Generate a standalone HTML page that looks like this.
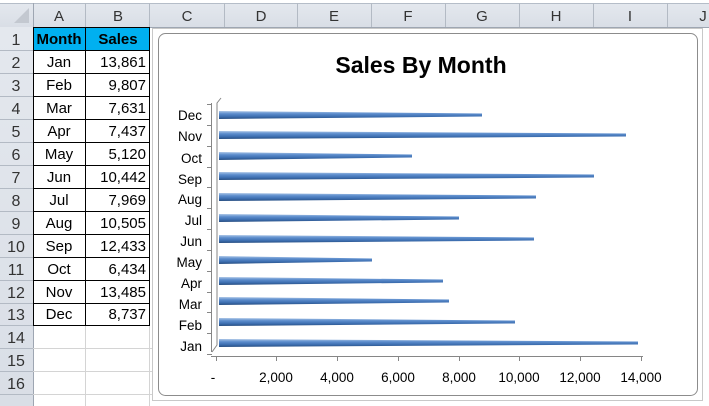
<!DOCTYPE html>
<html><head><meta charset="utf-8"><style>
body{margin:0;width:709px;height:406px;overflow:hidden;background:#fff;font-family:"Liberation Sans",sans-serif;position:relative}
.a{position:absolute}
</style></head><body>
<svg class="a" style="left:0;top:0" width="709" height="406" xmlns="http://www.w3.org/2000/svg" font-family="Liberation Sans, sans-serif">
<defs>
<linearGradient id="hg" x1="0" y1="0" x2="0" y2="1"><stop offset="0" stop-color="#e4e8ee"/><stop offset="1" stop-color="#d9dee6"/></linearGradient>
<linearGradient id="bg" x1="0" y1="0" x2="0" y2="1"><stop offset="0" stop-color="#a9c4e6"/><stop offset="0.35" stop-color="#5b8ccc"/><stop offset="0.7" stop-color="#3d6eb0"/><stop offset="1" stop-color="#274d80"/></linearGradient>
</defs>
<rect x="0" y="3" width="709" height="24" fill="url(#hg)"/>
<line x1="0" y1="3.5" x2="709" y2="3.5" stroke="#b5bdc8"/>
<line x1="0" y1="27.5" x2="709" y2="27.5" stroke="#9ea6b2"/>
<rect x="0" y="27" width="33" height="379" fill="url(#hg)"/>
<line x1="33.5" y1="3" x2="33.5" y2="406" stroke="#9ea6b2"/>
<polygon points="14,23 29,23 29,8" fill="#c3c8d0"/>
<g stroke="#b3bac4">
<line x1="85.5" y1="3" x2="85.5" y2="27"/><line x1="149.5" y1="3" x2="149.5" y2="27"/><line x1="224.5" y1="3" x2="224.5" y2="27"/><line x1="297.5" y1="3" x2="297.5" y2="27"/><line x1="371.5" y1="3" x2="371.5" y2="27"/><line x1="445.5" y1="3" x2="445.5" y2="27"/><line x1="519.5" y1="3" x2="519.5" y2="27"/><line x1="593.5" y1="3" x2="593.5" y2="27"/><line x1="667.5" y1="3" x2="667.5" y2="27"/>
</g>
<g font-size="15" fill="#333" text-anchor="middle">
<text x="59" y="21">A</text><text x="118" y="21">B</text><text x="187" y="21">C</text><text x="261" y="21">D</text><text x="334" y="21">E</text><text x="408" y="21">F</text><text x="482" y="21">G</text><text x="556" y="21">H</text><text x="630" y="21">I</text><text x="703" y="21">J</text>
</g>
<g stroke="#b3bac4">
<line x1="0" y1="50.5" x2="33" y2="50.5"/><line x1="0" y1="73.5" x2="33" y2="73.5"/><line x1="0" y1="96.5" x2="33" y2="96.5"/><line x1="0" y1="119.5" x2="33" y2="119.5"/><line x1="0" y1="142.5" x2="33" y2="142.5"/><line x1="0" y1="165.5" x2="33" y2="165.5"/><line x1="0" y1="188.5" x2="33" y2="188.5"/><line x1="0" y1="211.5" x2="33" y2="211.5"/><line x1="0" y1="234.5" x2="33" y2="234.5"/><line x1="0" y1="257.5" x2="33" y2="257.5"/><line x1="0" y1="280.5" x2="33" y2="280.5"/><line x1="0" y1="303.5" x2="33" y2="303.5"/><line x1="0" y1="325.5" x2="33" y2="325.5"/><line x1="0" y1="348.5" x2="33" y2="348.5"/><line x1="0" y1="371.5" x2="33" y2="371.5"/><line x1="0" y1="394.5" x2="33" y2="394.5"/>
</g>
<g stroke="#d4d4d4">
<line x1="33" y1="348.5" x2="152" y2="348.5"/><line x1="33" y1="371.5" x2="152" y2="371.5"/><line x1="33" y1="394.5" x2="152" y2="394.5"/>
<line x1="85.5" y1="326" x2="85.5" y2="406"/><line x1="149.5" y1="326" x2="149.5" y2="406"/>
</g>
<g font-size="16" fill="#333" text-anchor="middle">
<text x="16" y="45">1</text><text x="16" y="68">2</text><text x="16" y="91">3</text><text x="16" y="114">4</text><text x="16" y="137">5</text><text x="16" y="160">6</text><text x="16" y="183">7</text><text x="16" y="206">8</text><text x="16" y="229">9</text><text x="16" y="252">10</text><text x="16" y="275">11</text><text x="16" y="298">12</text><text x="16" y="320">13</text><text x="16" y="343">14</text><text x="16" y="366">15</text><text x="16" y="389">16</text>
</g>
<rect x="33" y="27" width="116" height="23" fill="#00b0f0"/>
<g stroke="#000">
<line x1="33" y1="27.5" x2="150" y2="27.5"/><line x1="33" y1="50.5" x2="150" y2="50.5"/><line x1="33" y1="73.5" x2="150" y2="73.5"/><line x1="33" y1="96.5" x2="150" y2="96.5"/><line x1="33" y1="119.5" x2="150" y2="119.5"/><line x1="33" y1="142.5" x2="150" y2="142.5"/><line x1="33" y1="165.5" x2="150" y2="165.5"/><line x1="33" y1="188.5" x2="150" y2="188.5"/><line x1="33" y1="211.5" x2="150" y2="211.5"/><line x1="33" y1="234.5" x2="150" y2="234.5"/><line x1="33" y1="257.5" x2="150" y2="257.5"/><line x1="33" y1="280.5" x2="150" y2="280.5"/><line x1="33" y1="303.5" x2="150" y2="303.5"/><line x1="33" y1="325.5" x2="150" y2="325.5"/>
<line x1="33.5" y1="27" x2="33.5" y2="326"/><line x1="85.5" y1="27" x2="85.5" y2="326"/><line x1="149.5" y1="27" x2="149.5" y2="326"/>
</g>
<g font-size="15" fill="#000">
<text x="59" y="44" text-anchor="middle" font-weight="bold">Month</text><text x="118" y="44" text-anchor="middle" font-weight="bold">Sales</text>
<g text-anchor="middle"><text x="59" y="67">Jan</text><text x="59" y="90">Feb</text><text x="59" y="113">Mar</text><text x="59" y="136">Apr</text><text x="59" y="159">May</text><text x="59" y="182">Jun</text><text x="59" y="205">Jul</text><text x="59" y="228">Aug</text><text x="59" y="251">Sep</text><text x="59" y="274">Oct</text><text x="59" y="297">Nov</text><text x="59" y="319">Dec</text></g>
<g text-anchor="end"><text x="146" y="67">13,861</text><text x="146" y="90">9,807</text><text x="146" y="113">7,631</text><text x="146" y="136">7,437</text><text x="146" y="159">5,120</text><text x="146" y="182">10,442</text><text x="146" y="205">7,969</text><text x="146" y="228">10,505</text><text x="146" y="251">12,433</text><text x="146" y="274">6,434</text><text x="146" y="297">13,485</text><text x="146" y="319">8,737</text></g>
</g>
<rect x="152.5" y="28.5" width="550" height="372" fill="#fff" stroke="#c8c8c8"/>
<rect x="158.5" y="33.5" width="539" height="362" rx="7" fill="#fff" stroke="#8c8c8c"/>
<text x="421" y="73" font-size="23" font-weight="bold" text-anchor="middle" fill="#000">Sales By Month</text>
<g stroke="#868686" fill="none">
<polyline points="212,352 217,345 217,103 221,98"/>
<line x1="211.5" y1="352" x2="211.5" y2="103"/>
<line x1="211" y1="356.5" x2="643" y2="356.5"/>
<line x1="216.5" y1="357" x2="216.5" y2="361"/><line x1="276.5" y1="357" x2="276.5" y2="361"/><line x1="337.5" y1="357" x2="337.5" y2="361"/><line x1="398.5" y1="357" x2="398.5" y2="361"/><line x1="459.5" y1="357" x2="459.5" y2="361"/><line x1="519.5" y1="357" x2="519.5" y2="361"/><line x1="580.5" y1="357" x2="580.5" y2="361"/><line x1="641.5" y1="357" x2="641.5" y2="361"/>
<line x1="207" y1="104.5" x2="212" y2="104.5"/><line x1="207" y1="125.5" x2="212" y2="125.5"/><line x1="207" y1="146.5" x2="212" y2="146.5"/><line x1="207" y1="167.5" x2="212" y2="167.5"/><line x1="207" y1="187.5" x2="212" y2="187.5"/><line x1="207" y1="208.5" x2="212" y2="208.5"/><line x1="207" y1="229.5" x2="212" y2="229.5"/><line x1="207" y1="250.5" x2="212" y2="250.5"/><line x1="207" y1="271.5" x2="212" y2="271.5"/><line x1="207" y1="292.5" x2="212" y2="292.5"/><line x1="207" y1="312.5" x2="212" y2="312.5"/><line x1="207" y1="333.5" x2="212" y2="333.5"/><line x1="207" y1="354.5" x2="212" y2="354.5"/>
</g>
<g font-size="13.5" fill="#000" text-anchor="middle">
<text x="213" y="382">-</text><text x="276" y="382">2,000</text><text x="337" y="382">4,000</text><text x="398" y="382">6,000</text><text x="459" y="382">8,000</text><text x="519" y="382">10,000</text><text x="580" y="382">12,000</text><text x="641" y="382">14,000</text>
</g>
<g font-size="13.5" fill="#000" text-anchor="end">
<text x="202" y="120">Dec</text><text x="202" y="141">Nov</text><text x="202" y="163">Oct</text><text x="202" y="184">Sep</text><text x="202" y="204">Aug</text><text x="202" y="225">Jul</text><text x="202" y="246">Jun</text><text x="202" y="267">May</text><text x="202" y="288">Apr</text><text x="202" y="309">Mar</text><text x="202" y="330">Feb</text><text x="202" y="351">Jan</text>
</g>
<g fill="url(#bg)">
<polygon points="219,111 482,113.5 482,116.5 219,119"/>
<polygon points="219,131 626,133.5 626,136.5 219,139"/>
<polygon points="219,152 412,154.5 412,157.5 219,160"/>
<polygon points="219,172 594,174.5 594,177.5 219,180"/>
<polygon points="219,193 536,195.5 536,198.5 219,201"/>
<polygon points="219,214 459,216.5 459,219.5 219,222"/>
<polygon points="219,235 534,237.5 534,240.5 219,243"/>
<polygon points="219,256 372,258.5 372,261.5 219,264"/>
<polygon points="219,277 443,279.5 443,282.5 219,285"/>
<polygon points="219,297 449,299.5 449,302.5 219,305"/>
<polygon points="219,318 515,320.5 515,323.5 219,326"/>
<polygon points="219,339 638,341.5 638,344.5 219,347"/>
</g>
</svg>
</body></html>
